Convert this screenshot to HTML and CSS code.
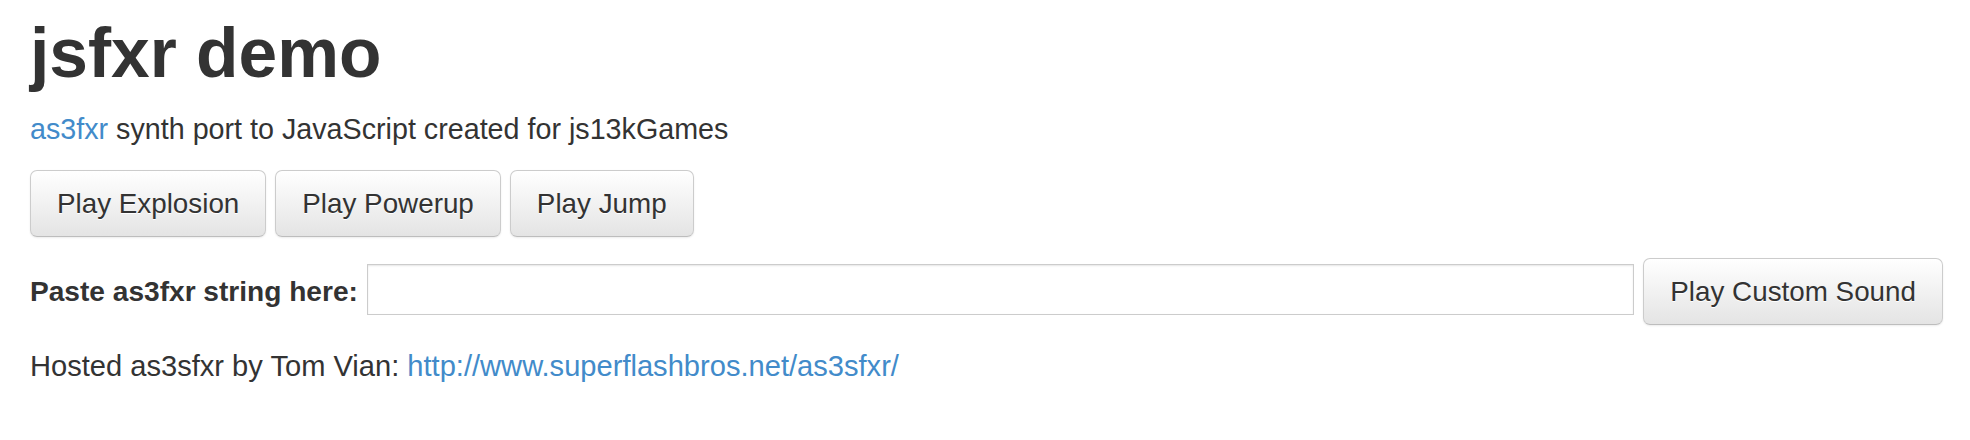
FILE: index.html
```html
<!DOCTYPE html>
<html lang="en">
<head>
<meta charset="utf-8">
<title>jsfxr demo</title>
<link rel="stylesheet" href="styles.css">
</head>
<body>
<div class="page">
  <h1 class="title">jsfxr demo</h1>
  <p class="lead"><a href="#">as3fxr</a> synth port to JavaScript created for js13kGames</p>
  <div class="btn-row">
    <button class="btn">Play Explosion</button>
    <button class="btn">Play Powerup</button>
    <button class="btn">Play Jump</button>
  </div>
  <div class="custom-row">
    <label class="custom-label" for="sfx">Paste as3fxr string here:</label>
    <input class="custom-input" id="sfx" type="text">
    <button class="btn">Play Custom Sound</button>
  </div>
  <p class="footer">Hosted as3sfxr by Tom Vian: <a href="#">http://www.superflashbros.net/as3sfxr/</a></p>
</div>
</body>
</html>
```
FILE: styles.css
```css
html, body {
  margin: 0;
  padding: 0;
  background: #ffffff;
}

body {
  font-family: "Liberation Sans", Arial, Helvetica, sans-serif;
  color: #333333;
}

.page {
  padding: 14px 27px 0 30px;
}

a {
  color: #428bca;
  text-decoration: none;
}

.title {
  margin: 0;
  font-size: 69.5px;
  line-height: 79px;
  font-weight: bold;
  color: #333333;
}

.lead {
  margin: 16px 0 0 0;
  font-size: 28.7px;
  line-height: 40px;
}

.btn-row {
  display: flex;
  gap: 9px;
  margin-top: 21px;
}

.btn {
  font-family: "Liberation Sans", Arial, Helvetica, sans-serif;
  font-size: 27.8px;
  line-height: 37px;
  padding: 14px 26px;
  color: #333333;
  border: 1px solid #cccccc;
  border-bottom-color: #bdbdbd;
  border-radius: 7px;
  background: linear-gradient(to bottom, #ffffff 0%, #e4e4e4 100%);
  text-shadow: 0 1px 0 #ffffff;
  box-shadow: inset 0 1px 0 rgba(255, 255, 255, 0.3), 0 1px 2px rgba(0, 0, 0, 0.08);
  cursor: pointer;
  white-space: nowrap;
}

.custom-row {
  display: flex;
  align-items: flex-start;
  gap: 9px;
  margin-top: 21px;
}

.custom-label {
  font-weight: bold;
  font-size: 28.1px;
  line-height: 67px;
  white-space: nowrap;
}

.custom-input {
  flex: 1;
  min-width: 0;
  box-sizing: border-box;
  height: 51px;
  margin: 6px 0 0 0;
  padding: 4px 8px;
  border: 1px solid #cccccc;
  border-radius: 0;
  background: #ffffff;
  box-shadow: inset 0 1px 2px rgba(0, 0, 0, 0.1);
  font-family: "Liberation Sans", Arial, sans-serif;
  font-size: 24px;
}

.footer {
  margin: 21px 0 0 0;
  font-size: 29.1px;
  line-height: 40px;
}
```
